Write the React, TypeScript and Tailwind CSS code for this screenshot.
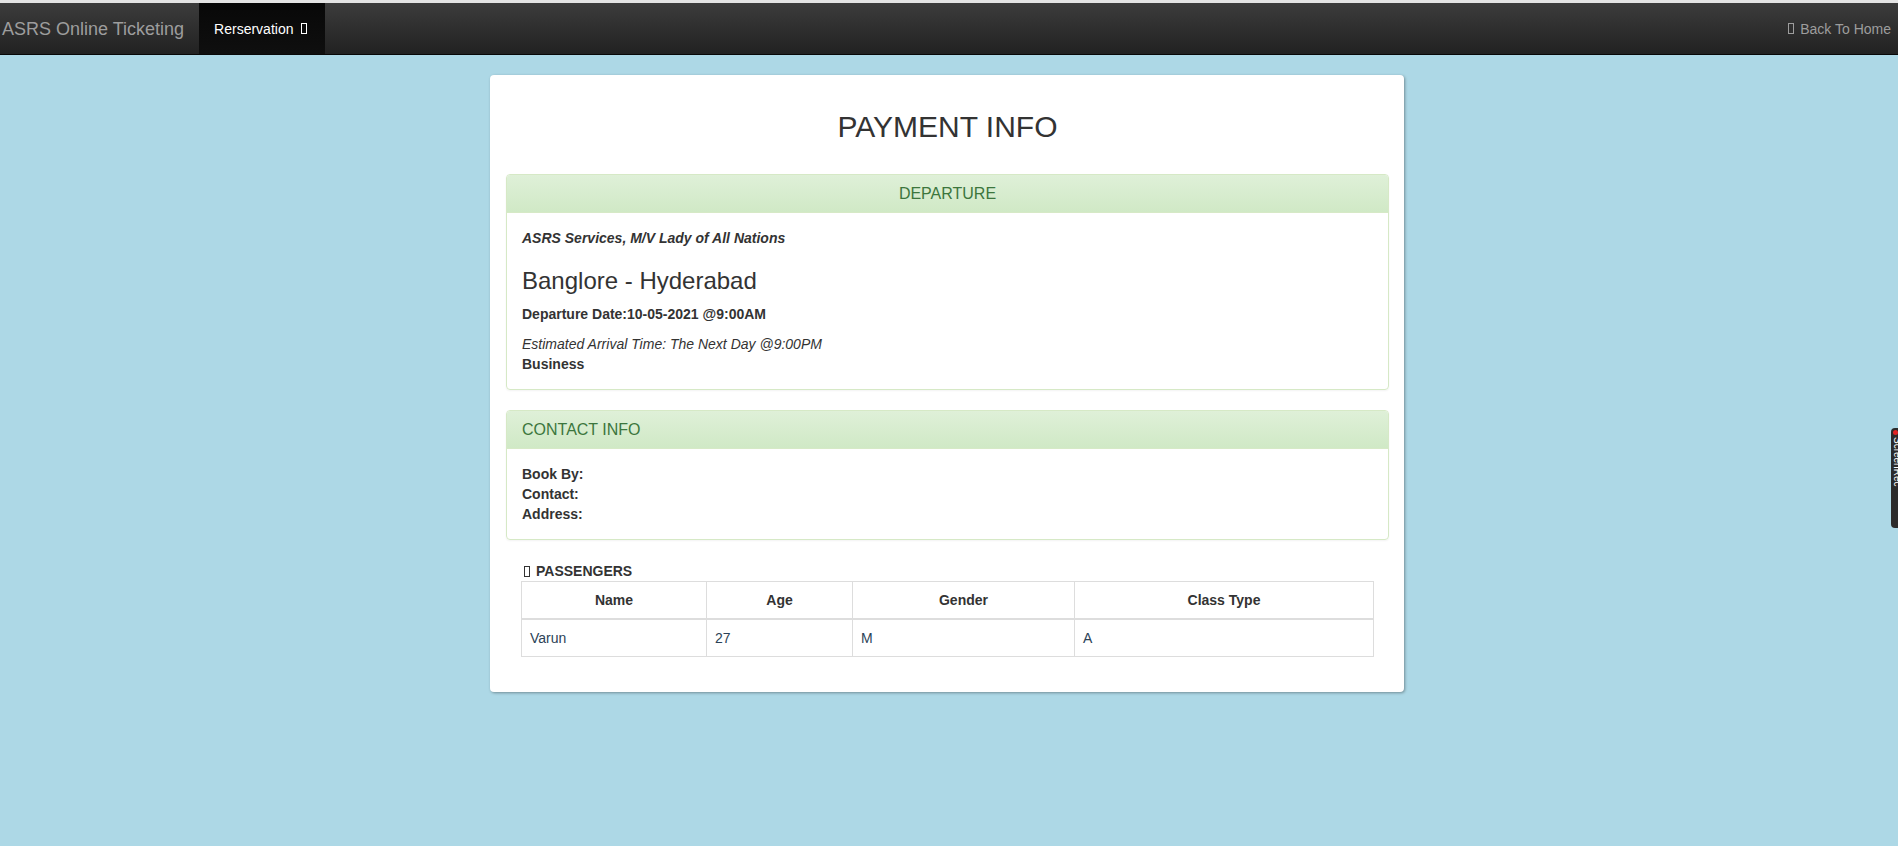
const passengers = [{ name: 'Varun', age: '27', gender: 'M', classType: 'A' }];

function Tofu({ className = '' }: { className?: string }) {
  return <span className={`inline-block w-[6px] h-[11px] border border-current align-[-1px] ${className}`} />;
}

function PanelHeading({ children, center }: { children: React.ReactNode; center?: boolean }) {
  return (
    <div
      className={`h-[38px] px-[15px] flex items-center text-[16px] text-[#3c763d] bg-gradient-to-b from-[#dff0d8] to-[#d0e9c6] border-b border-[#d6e9c6] rounded-t-[3px] ${center ? 'justify-center' : ''}`}
    >
      {children}
    </div>
  );
}

export default function App() {
  return (
    <div className="min-h-[846px] bg-[#add8e6] font-['Liberation_Sans',Arial,sans-serif] text-[14px] leading-[20px] text-[#333] relative">
      <div className="h-[3px] bg-[#e4e4e4]" />
      <nav className="h-[52px] flex items-stretch bg-gradient-to-b from-[#3c3c3c] to-[#222] border-b border-[#080808]">
        <div className="pl-[2px] pr-[15px] flex items-center text-[18px] text-[#9d9d9d]">ASRS Online Ticketing</div>
        <div className="pl-[15px] pr-[18px] flex items-center gap-[8px] text-white bg-gradient-to-b from-[#080808] to-[#0f0f0f]">
          Rerservation <Tofu />
        </div>
        <div className="ml-auto pr-[7px] flex items-center gap-[6px] text-[#9d9d9d]">
          <Tofu /> Back To Home
        </div>
      </nav>

      <div className="w-[914px] ml-[490px] mt-[20px] bg-white rounded-[4px] shadow-[1px_1px_3px_rgba(0,0,0,0.35)] pl-[16px] pr-[15px] pt-[35px] pb-[15px]">
        <h1 className="text-[30px] leading-[33px] text-center mb-[31px]">PAYMENT INFO</h1>

        <div className="border border-[#d6e9c6] rounded-[4px] shadow-[0_1px_2px_rgba(0,0,0,0.05)] mb-[20px]">
          <PanelHeading center>DEPARTURE</PanelHeading>
          <div className="p-[15px]">
            <div className="font-bold italic">ASRS Services, M/V Lady of All Nations</div>
            <h3 className="text-[24px] leading-[26px] mt-[20px] mb-[10px]">Banglore - Hyderabad</h3>
            <div className="font-bold mb-[10px]">Departure Date:10-05-2021 @9:00AM</div>
            <div className="italic">Estimated Arrival Time: The Next Day @9:00PM</div>
            <div className="font-bold">Business</div>
          </div>
        </div>

        <div className="border border-[#d6e9c6] rounded-[4px] shadow-[0_1px_2px_rgba(0,0,0,0.05)] mb-[21px]">
          <PanelHeading>CONTACT INFO</PanelHeading>
          <div className="p-[15px] font-bold">
            <div>Book By:</div>
            <div>Contact:</div>
            <div>Address:</div>
          </div>
        </div>

        <div className="mx-[15px] mb-[20px]">
          <div className="text-[14px] font-bold flex items-center gap-[6px] h-[20px] ml-[3px]">
            <Tofu className="w-[5px] h-[10px]" /> PASSENGERS
          </div>
          <table className="w-full table-fixed border-collapse border border-[#ddd]">
            <colgroup>
              <col className="w-[185px]" />
              <col className="w-[146px]" />
              <col className="w-[222px]" />
              <col />
            </colgroup>
            <thead>
              <tr>
                {['Name', 'Age', 'Gender', 'Class Type'].map((h) => (
                  <th key={h} className="border border-[#ddd] border-b-2 p-[8px] text-center font-bold">
                    {h}
                  </th>
                ))}
              </tr>
            </thead>
            <tbody>
              {passengers.map((p) => (
                <tr key={p.name} className="text-[#2c4257]">
                  <td className="border border-[#ddd] p-[8px]">{p.name}</td>
                  <td className="border border-[#ddd] p-[8px]">{p.age}</td>
                  <td className="border border-[#ddd] p-[8px]">{p.gender}</td>
                  <td className="border border-[#ddd] p-[8px]">{p.classType}</td>
                </tr>
              ))}
            </tbody>
          </table>
        </div>
      </div>

      {/* screen recorder tab stuck to the right edge */}
      <div className="absolute right-0 top-[428px] w-[7px] h-[100px] bg-[#2b2b2b] rounded-l-[4px] overflow-hidden">
        <div className="w-[5px] h-[5px] bg-[#e02424] rounded-full ml-[2px] mt-[2px]" />
        <div className="text-white text-[10px] leading-[10px] [writing-mode:vertical-rl] ml-[1px] mt-[2px]">ScreenRec</div>
      </div>
    </div>
  );
}
